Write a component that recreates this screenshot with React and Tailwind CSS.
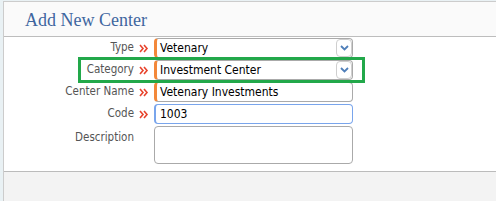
import React from 'react';

const FONT = { fontFamily: '"DejaVu Sans Condensed", "DejaVu Sans", sans-serif' };

function Req() {
  return (
    <svg width="10" height="9" viewBox="0 0 10 9" className="shrink-0">
      <polyline points="1,1 4,4.5 1,8" fill="none" stroke="#e8432c" strokeWidth="1.6" />
      <polyline points="5,1 8,4.5 5,8" fill="none" stroke="#e8432c" strokeWidth="1.6" />
    </svg>
  );
}

function Select({ value }) {
  return (
    <div className="flex items-center w-[199px] h-[20px] bg-white border border-[#aaaaaa] border-l-[3px] border-l-[#f3883a] rounded-[4px]">
      <span className="flex-1 pl-[3px] text-[12px] text-black leading-none">{value}</span>
      <span className="flex items-center justify-center w-[16px] h-[18px] border border-[#cfcfcf] rounded-[4px] bg-white">
        <svg width="9" height="6" viewBox="0 0 9 6">
          <polyline points="1,1 4.5,4.5 8,1" fill="none" stroke="#4f7fb9" strokeWidth="1.8" />
        </svg>
      </span>
    </div>
  );
}

function Row({ label, children, top, req = true }) {
  return (
    <div className={`flex ${top ? 'items-start' : 'items-center'}`}>
      <div className={`w-[130px] text-right text-[11.5px] text-[#555555] ${top ? 'pt-[3px]' : ''}`}>{label}</div>
      <div className="w-[20px] flex justify-center">{req && <Req />}</div>
      {children}
    </div>
  );
}

export default function App() {
  return (
    <div className="w-[496px] h-[201px] overflow-hidden bg-[#e9f1f4] pl-[3px] pt-[1px]" style={FONT}>
      <div className="w-[560px] h-[210px] flex flex-col border-t border-l border-[#cccccc] bg-white">
        {/* Header */}
        <div className="h-[35px] flex items-center pl-[21px] bg-[#fafafa] border-b border-[#bdbdbd]">
          <h2 className="text-[18px] text-[#3f669f] pt-[2px]" style={{ fontFamily: '"Liberation Serif", serif' }}>
            Add New Center
          </h2>
        </div>

        {/* Body */}
        <div className="h-[134px] flex flex-col gap-[2px] pt-[1px] bg-white">
          <Row label="Type">
            <Select value="Vetenary" />
          </Row>
          <div className="relative">
            <Row label="Category">
              <Select value="Investment Center" />
            </Row>
            <div className="absolute left-[74px] right-[198px] -top-[3px] -bottom-[3px] border-[3px] border-[#22a84a] pointer-events-none" />
          </div>
          <Row label="Center Name">
            <div className="flex items-center w-[199px] h-[20px] bg-white border border-[#aaaaaa] border-l-[3px] border-l-[#f3883a] rounded-[4px] pl-[3px] text-[12px] text-black">
              Vetenary Investments
            </div>
          </Row>
          <Row label="Code">
            <div className="flex items-center w-[199px] h-[20px] bg-white border border-[#79a5ec] border-l-[2px] rounded-[4px] pl-[4px] text-[12px] text-black">
              1003
            </div>
          </Row>
          <Row label="Description" top req={false}>
            <div className="w-[199px] h-[38px] bg-white border border-[#aaaaaa] rounded-[4px]" />
          </Row>
        </div>

        {/* Footer */}
        <div className="flex-1 bg-[#f3f3f3] border-t border-[#bbbbbb]" />
      </div>
    </div>
  );
}
